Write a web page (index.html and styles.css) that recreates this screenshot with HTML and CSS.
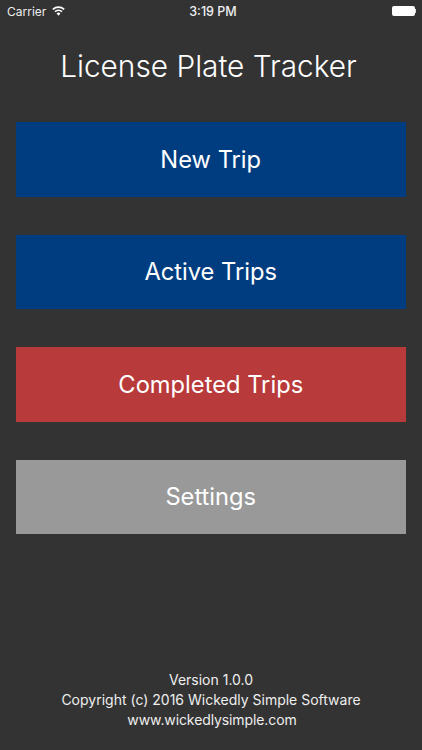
FILE: index.html
```html
<!DOCTYPE html>
<html lang="en">
<head>
<meta charset="utf-8">
<title>License Plate Tracker</title>
<link rel="stylesheet" href="styles.css">
</head>
<body>
<div class="screen">
  <header class="status">
    <div class="status-left">
      <span>Carrier</span>
      <svg class="wifi" viewBox="0 0 14 10" width="13" height="10"><path d="M7 10 4.900 7.600a3 3 0 0 1 4.200 0zM3.800 6.400 2.600 5a6.500 6.500 0 0 1 8.800 0l-1.200 1.400a4.700 4.700 0 0 0-6.400 0zM1.500 3.800.3 2.500a10 10 0 0 1 13.400 0l-1.200 1.300a8.200 8.200 0 0 0-11 0z" fill="#fff"/></svg>
    </div>
    <span class="status-time">3:19 PM</span>
    <div class="battery"><div class="battery-body"></div><div class="battery-cap"></div></div>
  </header>
  <h1 class="title">License Plate Tracker</h1>
  <nav class="menu">
    <a class="btn blue">New Trip</a>
    <a class="btn blue">Active Trips</a>
    <a class="btn red">Completed Trips</a>
    <a class="btn grey">Settings</a>
  </nav>
  <footer class="foot">
    <div>Version 1.0.0</div>
    <div>Copyright (c) 2016 Wickedly Simple Software</div>
    <div class="foot-url">www.wickedlysimple.com</div>
  </footer>
</div>
</body>
</html>
```
FILE: styles.css
```css
* { box-sizing: border-box; }
html, body { margin: 0; height: 100%; }
body { background: #333; color: #fff; font-family: Inter, "Liberation Sans", Arial, sans-serif; }
.screen { width: 422px; height: 750px; display: flex; flex-direction: column; overflow: hidden; }
.status { height: 22px; padding: 0 6px 0 7px; display: flex; align-items: center; justify-content: space-between; font-size: 12px; position: relative; flex: none; color: #eee; }
.status-left { display: flex; align-items: center; gap: 6px; }
.status-time { position: absolute; left: 4px; right: 0; text-align: center; font-size: 12.500px; font-weight: 500; }
.battery { display: flex; align-items: center; }
.battery-body { width: 23px; height: 10px; background: #fff; border-radius: 2px; }
.battery-cap { width: 1.500px; height: 4px; background: #ddd; }
.title { margin: 25px 0 0; padding-right: 5px; height: 38px; font-size: 29.800px; line-height: 38px; font-weight: 300; text-align: center; }
.menu { margin-top: 37px; padding: 0 16.500px 0 16px; display: flex; flex-direction: column; gap: 38px; }
.btn { height: 74.500px; display: flex; align-items: center; justify-content: center; font-size: 23.700px; font-weight: 400; }
.blue { background: #003d80; }
.red { background: #b93a3a; }
.grey { background: #999; }
.foot { margin-top: auto; padding-bottom: 20px; text-align: center; font-size: 14px; line-height: 20px; color: #eee; }
.foot-url { letter-spacing: -0.100px; padding-left: 2px; }
```
